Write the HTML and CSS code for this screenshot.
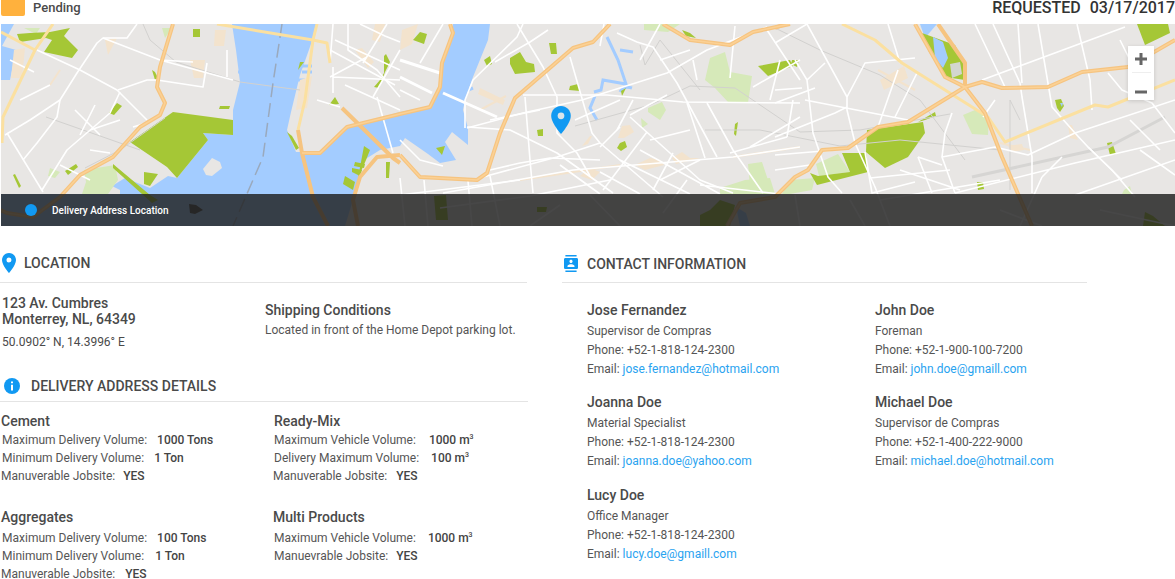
FILE: index.html
```html
<!DOCTYPE html>
<html lang="en">
<head>
<meta charset="utf-8">
<title>Delivery address</title>
<link rel="stylesheet" href="styles.css">
</head>
<body>
<header class="topbar">
  <div class="status"><span class="swatch"></span><span>Pending</span></div>
  <div class="requested"><span>REQUESTED</span><span>03/17/2017</span></div>
</header>
<section class="map">
  <svg class="map-art" viewBox="1 24 1174 202" preserveAspectRatio="none" aria-hidden="true">
    <rect class="land" x="0" y="24" width="1175" height="202"/>
    <g class="water">
      <path d="M0 24H14L2 46 16 50 10 80H0Z"/>
      <path d="M232 24H316L311 44 300 75 291 112 287 130 296 152 320 152 347 127 400 112 430 106 440 88 443 62 452 32 453 24H490L488 40 473 77 465 100 463 110 468 128 468 145 452 132 445 142 456 160 440 163 428 154 405 138 400 146 380 150 364 160 356 190 345 226H80L120 205 120 190 112 186 125 178 150 188 168 176 177 178 208 140 203 133 233 135 233 110 240 82 236 50Z"/>
      <path d="M0 194H345V226H0Z"/>
      <path d="M920 24H937L925 38 920 24Z"/>
      <path d="M52 44 57 42 58 50 54 50Z"/>
    </g>
    <g class="water-line">
      <path d="M607 37 618 60 626 84 603 80 601 90 594 92M620 50 633 52M595 96 590 108 597 120"/>
      <path d="M620 92C622 88 626 86 632 88"/>
      <path d="M445 100 473 88"/>
    </g>
    <g class="pier">
      <path d="M237 50H250M238 72H250M300 66H312M302 72H312M305 80H296"/>
    </g>
    <path class="islet" d="M203 169 212 158 220 162 222 168 212 176 206 175Z"/>
    <path class="islet-dark" d="M189 204 196 205 203 210 195 214 190 213Z"/>
    <g class="tan">
      <path d="M215 30H226L224 46H214Z"/>
      <path d="M14 50 25 48 22 78 11 78Z"/>
      <path d="M105 40 117 38 108 55Z"/>
      <path d="M190 60H205L203 78H194Z"/>
      <path d="M300 80 312 76 307 108 296 110Z"/>
      <path d="M355 50 362 48 374 62 368 68Z"/>
      <path d="M375 24H385L380 42 372 40Z"/>
      <path d="M402 30 418 24 412 44 400 50Z"/>
      <path d="M480 88 505 100 503 105 478 94Z"/>
      <path d="M635 165 650 158 660 160 664 165 645 170Z"/>
      <path d="M682 152 690 158 700 158 676 164 672 158Z"/>
      <path d="M590 136H592L588 144 582 146Z"/>
      <path d="M622 126 630 125 634 132 624 138 618 138Z"/>
      <path d="M580 176 590 168 600 172 592 180Z"/>
      <path d="M1068 125 1072 125 1078 140 1070 138Z"/>
      <path d="M880 80 904 66 908 78 884 90Z"/>
      <path d="M1008 146 1022 144 1024 150 1012 152Z"/>
    </g>
    <g class="tan-line">
      <path d="M506 96 480 110M520 180 620 165M733 157 800 147M1000 143 1030 150"/>
      <path d="M60 70 50 85"/>
      <path d="M878 70 915 90"/>
    </g>
    <g class="park-light">
      <path d="M50 168 60 172 55 178 48 176Z"/>
      <path d="M84 170 115 165 118 180 108 194H82L86 182Z"/>
      <path d="M162 28H172L165 38Z"/>
      <path d="M710 58 725 52 730 72 752 76 748 103 728 102 715 88 705 80Z"/>
      <path d="M648 108 662 102 666 110 660 120 648 112Z"/>
      <path d="M641 118 648 124 642 128Z"/>
      <path d="M644 24H680L668 32 644 30Z"/>
      <path d="M720 188 745 180 770 178 775 194H720Z"/>
      <path d="M748 164 762 162 770 186 750 186Z"/>
      <path d="M816 164 838 154 850 172 819 176Z"/>
      <path d="M790 180 815 178 812 190 790 194 782 194Z"/>
      <path d="M963 115 975 110 989 117 988 135 972 134Z"/>
      <path d="M1124 190 1130 186 1132 194H1122Z"/>
      <path d="M24 28 H40L36 34Z"/>
    </g>
    <g class="park">
      <path d="M173 112 233 120 233 135 203 133 208 140 177 178 167 167 130 142 150 128Z"/>
      <path d="M50 32 70 28 64 36 78 50 72 58 44 52 52 40 46 38 20 42 17 34 30 33Z"/>
      <path d="M193 29H200V37H193Z"/>
      <path d="M117 103 122 106 114 115 109 113Z"/>
      <path d="M65 171 76 164 78 167 68 175Z"/>
      <path d="M13 175 15 174 21 186 19 188Z"/>
      <path d="M152 70 155 72 158 78 155 80Z"/>
      <path d="M220 106H230L229 109H219Z"/>
      <path d="M300 62 304 62 298 70Z"/>
      <path d="M380 80 384 73 384 56 386 54 390 62 385 72 379 88 374 87Z"/>
      <path d="M329 105 335 97 339 104Z"/>
      <path d="M287 132 292 136 299 148 296 150Z"/>
      <path d="M144 172 158 174 150 186 144 184Z"/>
      <path d="M113 164 150 195 158 200 152 203 113 168Z"/>
      <path d="M358 178 364 146 370 150 366 160Z"/>
      <path d="M386 162 390 162 389 178 386 178Z"/>
      <path d="M345 176 355 182 353 190 343 184Z"/>
      <path d="M352 168 362 170 360 176 352 172Z"/>
      <path d="M355 162 365 164 364 168 354 166Z"/>
      <path d="M484 60 490 56 492 64 487 66Z"/>
      <path d="M510 58 520 52 526 62 534 64 535 72 515 74 510 64Z"/>
      <path d="M549 43H556L557 54 551 54Z"/>
      <path d="M570 86 578 84 580 91 569 90Z"/>
      <path d="M537 130 543 129 543 136 538 136Z"/>
      <path d="M620 143 625 141 627 147 621 151 617 148Z"/>
      <path d="M621 91 626 88 624 92 622 96Z"/>
      <path d="M758 66 790 60 793 66 768 76Z"/>
      <path d="M792 60 799 60 797 67 791 64Z"/>
      <path d="M735 124 738 122 736 136 734 134Z"/>
      <path d="M682 30 690 33 696 38 686 36Z"/>
      <path d="M420 32 427 34 424 44 413 40Z"/>
      <path d="M867 130 923 122 925 133 908 157 885 168 866 152Z"/>
      <path d="M842 153 866 153 868 172 817 185 810 173 818 176 850 172Z"/>
      <path d="M922 33 955 45 967 67 965 80 945 77 929 52Z"/>
      <path d="M918 122 935 112 936 116 925 120Z"/>
      <path d="M1137 24H1168L1170 33 1145 45Z"/>
      <path d="M1107 143 1112 142 1116 154 1110 155Z"/>
      <path d="M977 182 983 182 984 189 978 190Z"/>
      <path d="M436 148 445 146 442 155Z"/>
      <path d="M1055 100 1061 99 1064 106 1060 112 1057 108Z"/>
      <path d="M434 196 446 195 448 220 436 220Z"/>
      <path d="M537 207 547 207 546 212 537 212Z"/>
      <path d="M700 215 710 210 720 200 735 205 730 226H700Z"/>
      <path d="M1145 212 1153 216 1165 226H1143Z"/>
    </g>
    <path class="lake" d="M933 37 943 42 948 58 943 68 935 58Z"/>
    <path class="lake" d="M736 207 746 213 750 226H740Z"/>
    <path class="lake" d="M1060 103 1063 103 1062 107Z"/>
    <path class="gravel" d="M950 64 960 62 962 74 952 78Z"/>
    <g class="rail">
      <path d="M46 117 140 150"/>
      <path d="M143 24 150 40 176 62 240 82 300 90"/>
      <path d="M85 168 120 150 165 118"/>
      <path d="M575 126 650 105 690 86 735 88 800 132 860 130 950 114"/>
      <path d="M705 130 760 130 840 146 900 140 1000 150"/>
      <path d="M640 45 645 65 660 40 700 90"/>
      <path d="M775 28 820 50 880 75 920 100 965 160"/>
      <path d="M1010 190 1010 100 1020 120"/>
    </g>
    <path class="rail-thick" d="M972 177 1108 147 1165 117"/>
    <path class="shipline" d="M282 24 273 83 263 157 233 226"/>
    <g class="road">
      <path d="M37 50 80 70 117 90 147 120"/>
      <path d="M103 38 160 60 193 62M160 60 233 80"/>
      <path d="M137 24 127 38 103 38 97 43 77 73 60 100 30 120 5 135"/>
      <path d="M118 90 147 80 157 80 203 87 207 63"/>
      <path d="M60 100 57 117 37 143 23 160"/>
      <path d="M7 133 43 192M120 92 110 113 67 150 42 190"/>
      <path d="M90 150 110 153M133 127 150 122M227 50V77"/>
      <path d="M333 24 330 63M348 24V50L377 70 400 97"/>
      <path d="M333 67V93M400 50 373 97M387 24 363 63M317 100 340 107M377 97 393 153M330 77 367 57M333 77 400 80"/>
      <path d="M335 40 400 70M330 50 395 85M345 85 400 110M360 24 385 36 400 42"/>
      <path class="road-wide" d="M400 60 440 73M400 77 432 93M443 93 497 117"/>
      <path d="M420 63 443 24M400 90 420 100"/>
      <path d="M467 128 523 113 582 100 667 73 707 50 767 27"/>
      <path d="M523 95 607 95 683 102 800 103"/>
      <path d="M517 24 543 67 557 97 557 133 577 153 590 176"/>
      <path d="M570 57 592 133 600 143 663 197"/>
      <path d="M617 33 637 42 653 47 677 83 697 120 717 157"/>
      <path d="M483 177 557 157 600 143M490 170 520 163 550 158 600 160"/>
      <path d="M443 193 517 180 573 170 733 157 800 147"/>
      <path d="M465 128 465 100 473 80 517 37 523 24"/>
      <path d="M467 127 510 130 557 153 613 193"/>
      <path d="M525 97 530 160 533 193M630 117 700 180 733 193M620 127 600 147M647 132 603 190"/>
      <path d="M687 103 705 158M633 100 617 130M667 95 630 115M687 180 663 213M673 153 653 190"/>
      <path d="M730 153 787 137M707 103 733 150 763 193M793 100 787 137M800 117 750 147M767 30 800 80M753 87 800 60M693 60 697 80"/>
      <path d="M400 178 405 226M424 180 428 226M468 181 472 226M490 176 500 226M400 195 520 180M440 208 530 196 610 180"/>
      <path d="M400 140 420 160 443 166"/>
      <path d="M807 24 847 97 847 110 855 143 875 187 890 226"/>
      <path d="M847 97 865 63 915 58"/>
      <path d="M775 43 807 24M795 60 807 80 825 63M807 80 813 133 828 177 842 193"/>
      <path d="M775 103 815 88M805 100 908 120M775 90 802 88"/>
      <path d="M775 137 835 113 847 107"/>
      <path d="M878 127 898 70M895 117 917 73M888 24 900 63"/>
      <path d="M982 80 1125 27M975 24 1005 87M993 24 1020 83 1022 97 1032 157 1032 193M1018 24 1022 83"/>
      <path d="M1038 24 1052 107 1075 133 1088 147 1122 180M1077 24 1090 80 1092 110M1108 73 1122 90 1152 103 1175 133"/>
      <path d="M995 100 983 117M952 113 945 133 942 157 955 193M942 157 995 147 1028 155 1075 133 1175 100"/>
      <path d="M918 157 942 165M955 193 1075 163 1175 140M1042 177 1062 157M1088 147 1112 170 1135 197"/>
      <path d="M918 157 932 193M865 152 872 193 915 182M775 155 835 150M870 178 950 170"/>
      <path d="M1042 177 1020 226M1075 195 1175 160M1000 210 1042 226M1140 150 1175 175M1100 210 1175 226"/>
      <path d="M775 170 810 165M795 195 800 226M850 200 865 226M530 226 560 205M590 195 620 226"/>
      <path d="M620 160 690 194M640 150 720 194M700 185 780 194M660 180 700 160M560 165 600 194M600 172 640 194"/>
      <path d="M495 62 530 42M530 42 548 30M600 46 604 24M640 60 660 24M660 60 690 50M730 78 735 26M770 100 780 60"/>
      <path d="M10 60 34 72M20 100 50 85M75 110 100 135M90 130 120 120M60 165 90 180M95 105 80 135"/>
      <path d="M540 110 490 120M575 120 620 100M690 130 650 140"/>
      <path d="M900 170 960 190M880 200 1000 180M1130 120 1160 150M1120 40 1140 80"/>
    </g>
    <g class="hw-pale">
      <path d="M53 24 35 50 3 117 2 143"/>
      <path d="M1 32 35 50"/>
      <path d="M217 24 313 40 327 43 330 63"/>
      <path d="M317 24 313 40 305 100 298 130"/>
      <path d="M842 24 875 40 902 63 945 90 988 117 1005 142 1095 105 1108 107 1175 80"/>
    </g>
    <g class="hw">
      <path d="M173 24 160 67 157 87 165 103 160 115 140 127 113 157 80 175 60 197 33 217 7 213 0 210"/>
      <path d="M298 130 302 153 313 197 328 226"/>
      <path d="M302 153 320 153 347 127 400 114 430 107 440 87 442 63 453 33 450 24"/>
      <path d="M342 108 393 158 400 163"/>
      <path d="M400 155 420 177 477 180 487 173 500 133 515 98 573 48 593 42 610 24"/>
      <path d="M400 155 377 157 360 177 353 200 358 226"/>
      <path d="M663 24 690 40 730 45 753 32 790 24"/>
      <path d="M775 28 785 24"/>
      <path d="M915 24 945 77 965 87 985 113 1002 157 1032 226"/>
      <path d="M938 24 965 63 965 87"/>
      <path d="M965 87 982 82 1002 88 1048 87 1082 72 1128 67 1175 40"/>
      <path d="M965 87 908 122 878 127 848 148 822 150 808 170 795 177 775 197 740 203 727 226"/>
    </g>
    <g class="hw-core">
      <path d="M173 24 160 67 157 87 165 103 160 115 140 127 113 157 80 175 60 197 33 217 7 213 0 210"/>
      <path d="M400 155 420 177 477 180 487 173 500 133 515 98 573 48 593 42 610 24"/>
      <path d="M302 153 320 153 347 127 400 114 430 107 440 87 442 63 453 33 450 24"/>
      <path d="M663 24 690 40 730 45 753 32 790 24"/>
      <path d="M965 87 982 82 1002 88 1048 87 1082 72 1128 67 1175 40"/>
      <path d="M965 87 908 122 878 127 848 148 822 150 808 170 795 177 775 197 740 203 727 226"/>
      <path d="M915 24 945 77 965 87 985 113 1002 157 1032 226"/>
    </g>
  </svg>
  <div class="zoom-box">
    <svg class="zoom-icon" viewBox="0 0 12 12" aria-hidden="true"><path d="M0 4.5H4.5V0H7.5V4.5H12V7.5H7.5V12H4.5V7.5H0Z"/></svg>
    <span class="zoom-rule"></span>
    <svg class="zoom-icon" viewBox="0 0 12 12" aria-hidden="true"><path d="M0 4.5H12V7.5H0Z"/></svg>
  </div>
  <svg class="map-pin" viewBox="5 2 14 20" aria-hidden="true"><path class="blue" d="M12 2C8.13 2 5 5.13 5 9c0 5.25 7 13 7 13s7-7.75 7-13c0-3.87-3.13-7-7-7z"/><circle class="pin-dot" cx="12" cy="9" r="2.4"/></svg>
  <div class="legend"><span class="legend-dot"></span><span>Delivery Address Location</span></div>
</section>
<main class="details">
  <div class="col-left">
    <h2 class="sec-head sec-location">
      <svg class="ic-pin" viewBox="5 2 14 20" aria-hidden="true"><path class="blue" d="M12 2C8.13 2 5 5.13 5 9c0 5.25 7 13 7 13s7-7.75 7-13c0-3.87-3.13-7-7-7zm0 9.5a2.5 2.5 0 1 1 0-5 2.5 2.5 0 0 1 0 5z"/></svg>
      <span>LOCATION</span>
    </h2>
    <div class="loc-row">
      <div class="loc-addr">
        <p class="addr">123 Av. Cumbres<br>Monterrey, NL, 64349</p>
        <p class="coords">50.0902° N, 14.3996° E</p>
      </div>
      <div class="loc-ship">
        <h3 class="ship-title">Shipping Conditions</h3>
        <p class="ship-text">Located in front of the Home Depot parking lot.</p>
      </div>
    </div>
    <h2 class="sec-head sec-delivery">
      <svg class="ic-info" viewBox="0 0 16 16" aria-hidden="true"><circle class="blue" cx="8" cy="8" r="8"/><path class="white" d="M7 3.4h2v1.9H7zM7 6.8h2v5.8H7z"/></svg>
      <span>DELIVERY ADDRESS DETAILS</span>
    </h2>
    <div class="products">
      <div class="prod">
        <h3 class="prod-title">Cement</h3>
        <p class="line in"><span>Maximum Delivery Volume:</span><b class="gap-10">1000 Tons</b></p>
        <p class="line in"><span>Minimum Delivery Volume:</span><b class="gap-10">1 Ton</b></p>
        <p class="line"><span>Manuverable Jobsite:</span><b class="gap-8">YES</b></p>
      </div>
      <div class="prod">
        <h3 class="prod-title in">Ready-Mix</h3>
        <p class="line in"><span>Maximum Vehicle Volume:</span><b class="gap-13">1000 m<sup>3</sup></b></p>
        <p class="line in"><span>Delivery Maximum Volume:</span><b class="gap-12">100 m<sup>3</sup></b></p>
        <p class="line"><span>Manuverable Jobsite:</span><b class="gap-9">YES</b></p>
      </div>
      <div class="prod prod-low">
        <h3 class="prod-title">Aggregates</h3>
        <p class="line in"><span>Maximum Delivery Volume:</span><b class="gap-10">100 Tons</b></p>
        <p class="line in"><span>Minimum Delivery Volume:</span><b class="gap-11">1 Ton</b></p>
        <p class="line"><span>Manuverable Jobsite:</span><b class="gap-10">YES</b></p>
      </div>
      <div class="prod prod-low">
        <h3 class="prod-title">Multi Products</h3>
        <p class="line in"><span>Maximum Vehicle Volume:</span><b class="gap-12">1000 m<sup>3</sup></b></p>
        <p class="line in"><span>Manuevrable Jobsite:</span><b class="gap-8">YES</b></p>
      </div>
    </div>
  </div>
  <div class="col-right">
    <h2 class="sec-head sec-contact">
      <svg class="ic-contact" viewBox="2 0 20 24" aria-hidden="true"><path class="blue" d="M20 0H4v2h16V0zM4 24h16v-2H4v2zM20 4H4c-1.1 0-2 .9-2 2v12c0 1.1.9 2 2 2h16c1.1 0 2-.9 2-2V6c0-1.1-.9-2-2-2zm-8 2.75c1.24 0 2.25 1.01 2.25 2.25s-1.01 2.25-2.25 2.25S9.75 10.24 9.75 9 10.76 6.75 12 6.75zM17 17H7v-1.5c0-1.67 3.33-2.5 5-2.5s5 .83 5 2.5V17z"/></svg>
      <span>CONTACT INFORMATION</span>
    </h2>
    <div class="contacts">
      <div class="contact">
        <h3 class="name">Jose Fernandez</h3>
        <p class="c-line">Supervisor de Compras</p>
        <p class="c-line">Phone: +52-1-818-124-2300</p>
        <p class="c-line">Email: <a href="#">jose.fernandez@hotmail.com</a></p>
      </div>
      <div class="contact">
        <h3 class="name">John Doe</h3>
        <p class="c-line">Foreman</p>
        <p class="c-line">Phone: +52-1-900-100-7200</p>
        <p class="c-line">Email: <a href="#">john.doe@gmaill.com</a></p>
      </div>
      <div class="contact">
        <h3 class="name">Joanna Doe</h3>
        <p class="c-line">Material Specialist</p>
        <p class="c-line">Phone: +52-1-818-124-2300</p>
        <p class="c-line">Email: <a href="#">joanna.doe@yahoo.com</a></p>
      </div>
      <div class="contact">
        <h3 class="name">Michael Doe</h3>
        <p class="c-line">Supervisor de Compras</p>
        <p class="c-line">Phone: +52-1-400-222-9000</p>
        <p class="c-line">Email: <a href="#">michael.doe@hotmail.com</a></p>
      </div>
      <div class="contact">
        <h3 class="name">Lucy Doe</h3>
        <p class="c-line">Office Manager</p>
        <p class="c-line">Phone: +52-1-818-124-2300</p>
        <p class="c-line">Email: <a href="#">lucy.doe@gmaill.com</a></p>
      </div>
    </div>
  </div>
</main>
</body>
</html>
```
FILE: styles.css
```css
* { box-sizing: border-box; }
html, body { margin: 0; padding: 0; }
body {
  height: 579px;
  overflow: hidden;
  background: #fff;
  color: #4a4a4a;
  font-family: Roboto, "Liberation Sans", sans-serif;
  font-size: 12px;
}
p, h2, h3 { margin: 0; }

.topbar {
  height: 24px;
  display: flex;
  justify-content: space-between;
  align-items: flex-start;
  padding: 0 0 0 1px;
}
.status {
  display: flex;
  align-items: center;
  gap: 8px;
  height: 16px;
  line-height: 14px;
  font-size: 13px;
  font-weight: 500;
}
.swatch { width: 24px; height: 16px; background: #ffb13d; border-radius: 0 0 2px 2px; }
.requested {
  display: flex;
  gap: 9px;
  height: 16px;
  line-height: 15px;
  font-size: 16px;
  font-weight: 500;
  color: #333;
}

.map {
  position: relative;
  height: 202px;
  margin-left: 1px;
  overflow: hidden;
}
.map-art { display: block; width: 100%; height: 100%; }
.land { fill: #e8e6e4; }
.water path { fill: #a3ccff; }
.water-line { fill: none; stroke: #a3ccff; stroke-width: 3; }
.pier { fill: none; stroke: #a3ccff; stroke-width: 3; }
.islet { fill: #e8e6e4; }
.islet-dark { fill: #4a4a4a; }
.gravel { fill: #d3d6d0; }
.tan path { fill: #f3e3cd; }
.tan-line { fill: none; stroke: #f3e3cd; stroke-width: 2; }
.park path { fill: #a5c736; }
.park-light path { fill: #d6e9b9; }
.lake { fill: #a3ccff; }
.rail { fill: none; stroke: #d2d1cf; stroke-width: 1; }
.rail-thick { fill: none; stroke: #d6d5d3; stroke-width: 3; }
.shipline { fill: none; stroke: #9aa9bd; stroke-width: 1.5; stroke-dasharray: 14 6; }
.road { fill: none; stroke: #fff; stroke-width: 1.6; stroke-linejoin: round; }
.road-wide { stroke-width: 3; }
.hw-pale { fill: none; stroke: #fbe0a0; stroke-width: 3; stroke-linejoin: round; }
.hw { fill: none; stroke: #f6c480; stroke-width: 4; stroke-linejoin: round; }
.hw-core { fill: none; stroke: #fbd195; stroke-width: 1.6; stroke-linejoin: round; }

.zoom-box {
  position: absolute;
  top: 22px;
  right: 21px;
  width: 26px;
  height: 54px;
  display: flex;
  flex-direction: column;
  align-items: center;
  background: #fff;
  box-shadow: 0 1px 4px rgba(0, 0, 0, .15);
  padding-top: 7px;
}
.zoom-icon { display: block; width: 12px; height: 12px; }
.zoom-icon path { fill: #666; }
.zoom-rule { width: 19px; height: 1px; background: #eee; margin: 7px 0 13px; }

.map-pin { position: absolute; left: 550px; top: 82px; width: 20px; height: 28px; }
.pin-dot { fill: #d9e4ea; }
.blue { fill: #1199f2; }
.white { fill: #fff; }

.legend {
  position: absolute;
  left: -1px;
  right: 0;
  bottom: 0;
  height: 32px;
  display: flex;
  align-items: center;
  padding: 1px 0 0 25px;
  gap: 15px;
  background: rgba(30, 30, 30, .82);
  color: #fff;
  font-size: 10px;
  font-weight: 500;
}
.legend-dot { width: 12px; height: 12px; border-radius: 50%; background: #1199f2; margin-top: -1px; }

.details { display: flex; }
.col-left { width: 562px; padding-right: 34px; }
.col-right { width: 525px; }

.sec-head {
  display: flex;
  align-items: center;
  font-size: 14px;
  font-weight: 500;
  color: #4a4a4a;
  border-bottom: 1px solid #e4e4e4;
}
.sec-location { height: 57px; padding: 18px 0 0 2px; gap: 8px; margin-right: 1px; }
.sec-delivery { height: 29px; padding: 0 0 3px 4px; gap: 11px; margin-top: 23px; }
.sec-contact { height: 57px; padding: 19px 0 0 2px; gap: 9px; }
.ic-pin { width: 14px; height: 20px; }
.ic-info { width: 16px; height: 16px; }
.ic-contact { width: 14px; height: 17px; }

.loc-row { display: flex; padding: 12px 0 0 2px; }
.loc-addr { width: 263px; }
.addr { font-size: 14px; font-weight: 500; line-height: 16px; }
.coords { font-size: 12px; line-height: 16px; margin-top: 7px; }
.loc-ship { padding-top: 7px; }
.ship-title { font-size: 14px; font-weight: 500; line-height: 17px; }
.ship-text { font-size: 12px; line-height: 16px; margin-top: 3px; color: #555; }

.products {
  display: grid;
  grid-template-columns: 272px 1fr;
  grid-auto-rows: 96px;
  padding: 11px 0 0 1px;
}
.prod-title { font-size: 14px; font-weight: 500; line-height: 17px; margin-bottom: 1px; }
.prod-low .prod-title { margin-bottom: 3px; }
.line { font-size: 12px; line-height: 18px; white-space: nowrap; color: #555; }
.line b { font-weight: 500; color: #444; }
.in { padding-left: 1px; }
.gap-8 { margin-left: 8px; }
.gap-9 { margin-left: 9px; }
.gap-10 { margin-left: 10px; }
.gap-11 { margin-left: 11px; }
.gap-12 { margin-left: 12px; }
.gap-13 { margin-left: 13px; }
sup { font-size: 7px; line-height: 0; }

.contacts {
  display: grid;
  grid-template-columns: 288px 1fr;
  grid-template-rows: 92px 93px 92px;
  padding: 19px 0 0 25px;
}
.name { font-size: 14px; font-weight: 500; line-height: 17px; margin-bottom: 3px; }
.c-line { font-size: 12px; line-height: 19px; color: #555; }
.c-line a { color: #2aa3f0; text-decoration: none; }
```
